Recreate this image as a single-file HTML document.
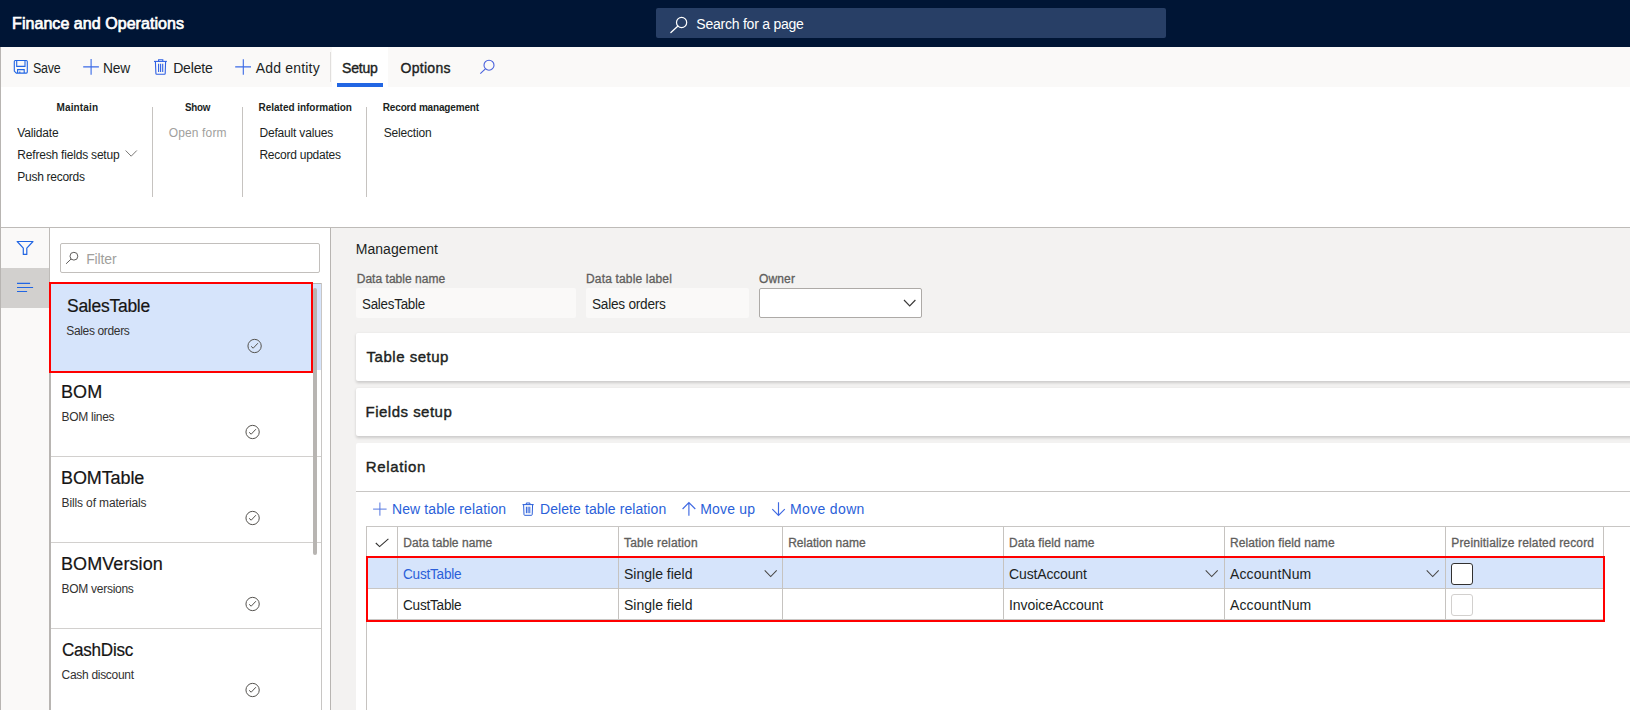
<!DOCTYPE html>
<html><head><meta charset="utf-8"><title>Finance and Operations</title>
<style>
*{box-sizing:border-box;margin:0;padding:0}
html,body{width:1630px;height:710px;overflow:hidden}
body{position:relative;background:#f3f2f1;font-family:"Liberation Sans",sans-serif;color:#201f1e}
.a{position:absolute}
.t{position:absolute;white-space:nowrap;line-height:1}
svg{position:absolute;overflow:visible}
.vl{position:absolute;width:1px;background:#c6c3c0}
.hl{position:absolute;height:1px;background:#c8c6c4}
</style></head><body>
<!-- header -->
<div class="a" style="left:0;top:0;width:1630px;height:47px;background:#001535"></div>
<div class="a" style="left:656px;top:8px;width:510px;height:30px;background:#283f66;border-radius:2px"></div>
<svg style="left:668px;top:14px" width="20" height="20" viewBox="0 0 20 20"><circle cx="13.6" cy="8.5" r="5.1" fill="none" stroke="#fff" stroke-width="1.2"/><path d="M10 12.1 L2.9 18.6" stroke="#fff" stroke-width="1.3" stroke-linecap="round"/></svg>
<!-- toolbar -->
<div class="a" style="left:0;top:47px;width:1630px;height:40px;background:#faf9f8"></div>
<div class="a" style="left:332px;top:47px;width:56px;height:40px;background:#fff"></div>
<div class="a" style="left:337px;top:83px;width:46px;height:4px;background:#2266e3"></div>
<div class="vl" style="left:330px;top:52px;height:30px;background:#e1dfdd"></div>
<!-- ribbon -->
<div class="a" style="left:0;top:87px;width:1630px;height:140px;background:#fff"></div>
<div class="hl" style="left:0;top:227px;width:1630px;background:#bebbb8"></div>
<div class="vl" style="left:152px;top:107px;height:90px"></div>
<div class="vl" style="left:242px;top:107px;height:90px"></div>
<div class="vl" style="left:366px;top:107px;height:90px"></div>
<!-- left strip + list pane -->
<div class="a" style="left:0;top:228px;width:50px;height:482px;background:#faf9f8"></div>
<div class="a" style="left:0;top:268px;width:50px;height:40px;background:#d2d0ce"></div>
<div class="a" style="left:50px;top:228px;width:280px;height:482px;background:#fff"></div>
<div class="vl" style="left:330px;top:228px;height:482px;background:#b8b5b2"></div>
<div class="vl" style="left:0;top:47px;height:663px;background:#b8b5b2"></div>
<div class="vl" style="left:49px;top:228px;height:55px;background:#bebbb8"></div>
<!-- filter box -->
<div class="a" style="left:60px;top:243px;width:260px;height:30px;background:#fff;border:1px solid #c2bfbc;border-radius:2px"></div>
<!-- list -->
<div class="a" style="left:51px;top:284px;width:270px;height:86px;background:#d6e4fb"></div>
<div class="hl" style="left:51px;top:283px;width:271px;background:#b8b5b2"></div>
<div class="vl" style="left:321px;top:283px;height:427px;background:#c8c6c4"></div>
<div class="a" style="left:49px;top:283px;width:2px;height:427px;background:#b8b5b2"></div>
<div class="hl" style="left:51px;top:456px;width:270px;background:#d2d0ce"></div>
<div class="hl" style="left:51px;top:542px;width:270px;background:#d2d0ce"></div>
<div class="hl" style="left:51px;top:628px;width:270px;background:#d2d0ce"></div>
<div class="a" style="left:313px;top:288px;width:4px;height:267px;background:#b8b5b2;border-radius:2px"></div>
<div class="a" style="left:49px;top:282px;width:264px;height:91px;background:#d6e4fb;border:2px solid #ff0000"></div>
<!-- main -->
<div class="a" style="left:356px;top:288px;width:220px;height:30px;background:#faf9f8;border-radius:2px"></div>
<div class="a" style="left:586px;top:288px;width:163px;height:30px;background:#faf9f8;border-radius:2px"></div>
<div class="a" style="left:759px;top:288px;width:163px;height:30px;background:#fff;border:1px solid #adaaa7;border-radius:2px"></div>
<div class="a" style="left:356px;top:333px;width:1290px;height:48px;background:#fff;border-radius:2px;box-shadow:0 1.5px 3px rgba(0,0,0,.16)"></div>
<div class="a" style="left:356px;top:388px;width:1290px;height:48px;background:#fff;border-radius:2px;box-shadow:0 1.5px 3px rgba(0,0,0,.16)"></div>
<div class="a" style="left:356px;top:443px;width:1290px;height:280px;background:#fff;border-radius:2px"></div>
<div class="hl" style="left:356px;top:491px;width:1274px"></div>
<!-- grid -->
<div class="hl" style="left:366px;top:526px;width:1264px"></div>
<div class="vl" style="left:366px;top:526px;height:184px"></div>
<div class="a" style="left:367px;top:558px;width:1236px;height:30px;background:#d6e4fb"></div>
<div class="hl" style="left:367px;top:588px;width:1237px"></div>
<div class="vl" style="left:397px;top:527px;height:93px"></div>
<div class="vl" style="left:618px;top:527px;height:93px"></div>
<div class="vl" style="left:782px;top:527px;height:93px"></div>
<div class="vl" style="left:1003px;top:527px;height:93px"></div>
<div class="vl" style="left:1224px;top:527px;height:93px"></div>
<div class="vl" style="left:1445px;top:527px;height:93px"></div>
<div class="vl" style="left:1603px;top:527px;height:93px"></div>
<div class="hl" style="left:368px;top:619px;width:1235px"></div>
<div class="a" style="left:1451px;top:563px;width:22px;height:22px;background:#fff;border:1px solid #323130;border-radius:3px"></div>
<div class="a" style="left:1451px;top:594px;width:22px;height:22px;background:#fff;border:1px solid #d2d0ce;border-radius:3px"></div>
<div class="a" style="left:366px;top:556px;width:1239px;height:66px;border:2px solid #ff0000"></div>
<!-- save icon -->
<svg style="left:13px;top:59px" width="16" height="16" viewBox="13 59 16 16" fill="none" stroke="#2266e3" stroke-width="1.1"><path d="M14.3 61.5 q0 -1 1 -1 H26.3 q1 0 1 1 V72.1 q0 1 -1 1 H16.3 L14.3 71.1 Z"/><path d="M16.7 60.5 V66.4 H25 V60.5"/><path d="M17.6 73.1 V69.6 H24.2 V73.1"/><path d="M19.8 73.1 V71.4"/></svg>
<!-- plus New -->
<svg style="left:82px;top:58px" width="18" height="18" viewBox="82 58 18 18" fill="none" stroke="#3a6ae6" stroke-width="1.1"><path d="M83.2 66.9 H98.9 M91.1 59.1 V74.7"/></svg>
<!-- trash Delete -->
<svg style="left:153px;top:58px" width="16" height="18" viewBox="153 58 16 18" fill="none" stroke="#2f60e4" stroke-width="1.1"><path d="M154 61.4 H166.9"/><path d="M158.6 61.4 V59.7 H162.8 V61.4"/><path d="M155.4 61.4 L155.9 73.6 q0 0.7 0.8 0.7 H164.4 q0.8 0 0.8 -0.7 L165.6 61.4"/><path d="M158.6 63.8 V71.9 M160.6 63.8 V71.9 M162.7 63.8 V71.9"/></svg>
<!-- plus Add entity -->
<svg style="left:234px;top:58px" width="18" height="18" viewBox="234 58 18 18" fill="none" stroke="#3a6ae6" stroke-width="1.1"><path d="M235.2 66.9 H251 M243.3 59.2 V74.8"/></svg>
<!-- toolbar search -->
<svg style="left:478px;top:58px" width="18" height="18" viewBox="478 58 18 18" fill="none" stroke="#4a62dc" stroke-width="1.1"><circle cx="489" cy="65.2" r="5"/><path d="M485.4 68.8 L480.3 73.7"/></svg>
<!-- ribbon chevron -->
<svg style="left:124px;top:148px" width="14" height="10" viewBox="124 148 14 10" fill="none" stroke="#7a7876" stroke-width="1"><path d="M125.6 150.5 L131.2 156.2 L136.8 150.5"/></svg>
<!-- funnel -->
<svg style="left:15px;top:239px" width="20" height="18" viewBox="15 239 20 18" fill="none" stroke="#2266e3" stroke-width="1.2" stroke-linejoin="round"><path d="M17.2 241.5 H33 L26.8 248.2 V254.4 H23.3 V248.2 Z"/></svg>
<!-- lines -->
<svg style="left:15px;top:280px" width="20" height="14" viewBox="15 280 20 14" fill="none" stroke="#2266e3" stroke-width="1.2"><path d="M17 283.4 H30.1 M17 287.5 H33.1 M17 291.5 H27.1"/></svg>
<!-- filter search -->
<svg style="left:64px;top:250px" width="16" height="16" viewBox="64 250 16 16" fill="none" stroke="#605e5c" stroke-width="1"><circle cx="73.9" cy="256.2" r="3.9"/><path d="M71.1 259 L66.1 263.8"/></svg>
<!-- check circles -->
<svg style="left:246px;top:337px" width="18" height="18" viewBox="246 337 18 18" fill="none" stroke="#55534f" stroke-width="1"><circle cx="254.6" cy="346" r="6.65"/><path d="M251.1 346.3 L253.2 348.2 L257.9 343.2"/></svg>
<svg style="left:244px;top:423px" width="18" height="18" viewBox="246 337 18 18" fill="none" stroke="#55534f" stroke-width="1"><circle cx="254.6" cy="346" r="6.65"/><path d="M251.1 346.3 L253.2 348.2 L257.9 343.2"/></svg>
<svg style="left:244px;top:509px" width="18" height="18" viewBox="246 337 18 18" fill="none" stroke="#55534f" stroke-width="1"><circle cx="254.6" cy="346" r="6.65"/><path d="M251.1 346.3 L253.2 348.2 L257.9 343.2"/></svg>
<svg style="left:244px;top:595px" width="18" height="18" viewBox="246 337 18 18" fill="none" stroke="#55534f" stroke-width="1"><circle cx="254.6" cy="346" r="6.65"/><path d="M251.1 346.3 L253.2 348.2 L257.9 343.2"/></svg>
<svg style="left:244px;top:681px" width="18" height="18" viewBox="246 337 18 18" fill="none" stroke="#55534f" stroke-width="1"><circle cx="254.6" cy="346" r="6.65"/><path d="M251.1 346.3 L253.2 348.2 L257.9 343.2"/></svg>
<!-- owner chevron -->
<svg style="left:902px;top:297px" width="16" height="12" viewBox="902 297 16 12" fill="none" stroke="#3b3a39" stroke-width="1.2"><path d="M904 300 L909.7 305.8 L915.4 300"/></svg>
<!-- relation actions -->
<svg style="left:372px;top:501px" width="16" height="16" viewBox="372 501 16 16" fill="none" stroke="#5577e0" stroke-width="1"><path d="M373.1 509.1 H386.6 M379.9 502.5 V515.7"/></svg>
<svg style="left:521px;top:501px" width="14" height="16" viewBox="521 501 14 16" fill="none" stroke="#2b5fd9" stroke-width="1"><path d="M522.5 504.6 H533.7"/><path d="M526.3 504.6 V503 H529.9 V504.6"/><path d="M523.6 504.6 L524 514.6 q0 .7 .7 .7 H531.5 q.7 0 .7 -.7 L532.6 504.6"/><path d="M526.4 506.7 V513.2 M528.1 506.7 V513.2 M529.8 506.7 V513.2"/></svg>
<svg style="left:681px;top:501px" width="16" height="16" viewBox="681 501 16 16" fill="none" stroke="#3f69e2" stroke-width="1.15"><path d="M688.9 515.8 V502.6 M682.6 509 L688.9 502.6 L695.3 509"/></svg>
<svg style="left:770px;top:501px" width="16" height="16" viewBox="770 501 16 16" fill="none" stroke="#3f69e2" stroke-width="1.15"><path d="M778.5 502.3 V515.4 M772.3 509.1 L778.5 515.4 L784.8 509.1"/></svg>
<!-- header check -->
<svg style="left:374px;top:536px" width="16" height="12" viewBox="374 536 16 12" fill="none" stroke="#323130" stroke-width="1.1"><path d="M375.8 543 L379.6 546.6 L388.4 538.9"/></svg>
<!-- cell chevrons -->
<svg style="left:763px;top:568px" width="16" height="12" viewBox="763 568 16 12" fill="none" stroke="#484644" stroke-width="1.05"><path d="M764.7 570.4 L770.7 576.5 L776.7 570.4"/></svg>
<svg style="left:1204px;top:568px" width="16" height="12" viewBox="763 568 16 12" fill="none" stroke="#484644" stroke-width="1.05"><path d="M764.7 570.4 L770.7 576.5 L776.7 570.4"/></svg>
<svg style="left:1425px;top:568px" width="16" height="12" viewBox="763 568 16 12" fill="none" stroke="#484644" stroke-width="1.05"><path d="M764.7 570.4 L770.7 576.5 L776.7 570.4"/></svg>

<div class="t" style="left:12.10px;top:16.00px;font-size:16px;letter-spacing:0.049px;color:#ffffff;-webkit-text-stroke:0.7px #ffffff;">Finance and Operations</div>
<div class="t" style="left:696.30px;top:17.00px;font-size:14px;letter-spacing:-0.232px;color:#ffffff;">Search for a page</div>
<div class="t" style="left:33.40px;top:61.00px;font-size:14px;letter-spacing:-0.250px;color:#201f1e;transform:scaleX(0.8893);transform-origin:0 0;">Save</div>
<div class="t" style="left:103.31px;top:61.00px;font-size:14px;letter-spacing:-0.250px;color:#201f1e;transform:scaleX(0.9855);transform-origin:0 0;">New</div>
<div class="t" style="left:173.20px;top:61.00px;font-size:14px;letter-spacing:-0.177px;color:#201f1e;">Delete</div>
<div class="t" style="left:255.80px;top:61.00px;font-size:14px;letter-spacing:0.182px;color:#201f1e;">Add entity</div>
<div class="t" style="left:342.10px;top:61.00px;font-size:14px;letter-spacing:-0.225px;color:#201f1e;-webkit-text-stroke:0.38px #201f1e;">Setup</div>
<div class="t" style="left:400.60px;top:61.00px;font-size:14px;letter-spacing:0.275px;color:#201f1e;-webkit-text-stroke:0.38px #201f1e;">Options</div>
<div class="t" style="left:56.50px;top:103.00px;font-size:10px;letter-spacing:0.136px;color:#201f1e;font-weight:700;">Maintain</div>
<div class="t" style="left:185.10px;top:103.00px;font-size:10px;letter-spacing:-0.250px;color:#201f1e;transform:scaleX(0.9795);transform-origin:0 0;font-weight:700;">Show</div>
<div class="t" style="left:258.60px;top:103.00px;font-size:10px;letter-spacing:-0.033px;color:#201f1e;font-weight:700;">Related information</div>
<div class="t" style="left:382.80px;top:103.00px;font-size:10px;letter-spacing:-0.162px;color:#201f1e;font-weight:700;">Record management</div>
<div class="t" style="left:17.30px;top:127.00px;font-size:12px;letter-spacing:-0.172px;color:#201f1e;">Validate</div>
<div class="t" style="left:17.30px;top:149.00px;font-size:12px;letter-spacing:-0.194px;color:#201f1e;">Refresh fields setup</div>
<div class="t" style="left:17.30px;top:171.00px;font-size:12px;letter-spacing:-0.282px;color:#201f1e;">Push records</div>
<div class="t" style="left:168.80px;top:127.00px;font-size:12px;letter-spacing:0.126px;color:#a19f9d;">Open form</div>
<div class="t" style="left:259.40px;top:127.00px;font-size:12px;letter-spacing:-0.173px;color:#201f1e;">Default values</div>
<div class="t" style="left:259.40px;top:149.00px;font-size:12px;letter-spacing:-0.240px;color:#201f1e;">Record updates</div>
<div class="t" style="left:383.70px;top:127.00px;font-size:12px;letter-spacing:-0.174px;color:#201f1e;">Selection</div>
<div class="t" style="left:86.20px;top:252.00px;font-size:14px;letter-spacing:-0.130px;color:#a19f9d;">Filter</div>
<div class="t" style="left:66.80px;top:297.00px;font-size:18px;letter-spacing:-0.250px;color:#161514;transform:scaleX(0.9697);transform-origin:0 0;-webkit-text-stroke:0.2px #161514;">SalesTable</div>
<div class="t" style="left:66.30px;top:325.00px;font-size:12px;letter-spacing:-0.351px;color:#323130;">Sales orders</div>
<div class="t" style="left:61.00px;top:383.00px;font-size:18px;letter-spacing:0.097px;color:#161514;-webkit-text-stroke:0.2px #161514;">BOM</div>
<div class="t" style="left:61.60px;top:411.00px;font-size:12px;letter-spacing:-0.293px;color:#323130;">BOM lines</div>
<div class="t" style="left:61.00px;top:469.00px;font-size:18px;letter-spacing:-0.103px;color:#161514;-webkit-text-stroke:0.2px #161514;">BOMTable</div>
<div class="t" style="left:61.60px;top:497.00px;font-size:12px;letter-spacing:-0.139px;color:#323130;">Bills of materials</div>
<div class="t" style="left:61.00px;top:555.00px;font-size:18px;letter-spacing:0.086px;color:#161514;-webkit-text-stroke:0.2px #161514;">BOMVersion</div>
<div class="t" style="left:61.60px;top:583.00px;font-size:12px;letter-spacing:-0.287px;color:#323130;">BOM versions</div>
<div class="t" style="left:62.00px;top:641.00px;font-size:18px;letter-spacing:-0.250px;color:#161514;transform:scaleX(0.9473);transform-origin:0 0;-webkit-text-stroke:0.2px #161514;">CashDisc</div>
<div class="t" style="left:61.60px;top:669.00px;font-size:12px;letter-spacing:-0.301px;color:#323130;">Cash discount</div>
<div class="t" style="left:355.70px;top:242.00px;font-size:14px;letter-spacing:0.064px;color:#201f1e;">Management</div>
<div class="t" style="left:356.70px;top:273.00px;font-size:12px;letter-spacing:0.030px;color:#605e5c;-webkit-text-stroke:0.3px #605e5c;">Data table name</div>
<div class="t" style="left:586.00px;top:273.00px;font-size:12px;letter-spacing:0.165px;color:#605e5c;-webkit-text-stroke:0.3px #605e5c;">Data table label</div>
<div class="t" style="left:759.10px;top:273.00px;font-size:12px;letter-spacing:0.113px;color:#605e5c;-webkit-text-stroke:0.3px #605e5c;">Owner</div>
<div class="t" style="left:362.00px;top:297.00px;font-size:14px;letter-spacing:-0.250px;color:#201f1e;transform:scaleX(0.9541);transform-origin:0 0;">SalesTable</div>
<div class="t" style="left:592.30px;top:297.00px;font-size:14px;letter-spacing:-0.250px;color:#201f1e;transform:scaleX(0.9744);transform-origin:0 0;">Sales orders</div>
<div class="t" style="left:366.60px;top:349.00px;font-size:15px;letter-spacing:0.512px;color:#201f1e;-webkit-text-stroke:0.4px #201f1e;">Table setup</div>
<div class="t" style="left:365.60px;top:404.00px;font-size:15px;letter-spacing:0.479px;color:#201f1e;-webkit-text-stroke:0.4px #201f1e;">Fields setup</div>
<div class="t" style="left:365.70px;top:459.00px;font-size:15px;letter-spacing:0.658px;color:#201f1e;-webkit-text-stroke:0.4px #201f1e;">Relation</div>
<div class="t" style="left:391.90px;top:502.00px;font-size:14px;letter-spacing:0.125px;color:#2b5fd9;">New table relation</div>
<div class="t" style="left:540.00px;top:502.00px;font-size:14px;letter-spacing:0.083px;color:#2b5fd9;">Delete table relation</div>
<div class="t" style="left:700.30px;top:502.00px;font-size:14px;letter-spacing:0.165px;color:#2b5fd9;">Move up</div>
<div class="t" style="left:790.00px;top:502.00px;font-size:14px;letter-spacing:0.349px;color:#2b5fd9;">Move down</div>
<div class="t" style="left:403.30px;top:537.00px;font-size:12px;letter-spacing:0.059px;color:#605e5c;-webkit-text-stroke:0.3px #605e5c;">Data table name</div>
<div class="t" style="left:624.00px;top:537.00px;font-size:12px;letter-spacing:0.169px;color:#605e5c;-webkit-text-stroke:0.3px #605e5c;">Table relation</div>
<div class="t" style="left:788.20px;top:537.00px;font-size:12px;letter-spacing:0.008px;color:#605e5c;-webkit-text-stroke:0.3px #605e5c;">Relation name</div>
<div class="t" style="left:1009.10px;top:537.00px;font-size:12px;letter-spacing:0.095px;color:#605e5c;-webkit-text-stroke:0.3px #605e5c;">Data field name</div>
<div class="t" style="left:1230.00px;top:537.00px;font-size:12px;letter-spacing:0.103px;color:#605e5c;-webkit-text-stroke:0.3px #605e5c;">Relation field name</div>
<div class="t" style="left:1451.30px;top:537.00px;font-size:12px;letter-spacing:0.146px;color:#605e5c;-webkit-text-stroke:0.3px #605e5c;">Preinitialize related record</div>
<div class="t" style="left:403.30px;top:567.00px;font-size:14px;letter-spacing:-0.250px;color:#2b5fd9;transform:scaleX(0.9724);transform-origin:0 0;">CustTable</div>
<div class="t" style="left:624.00px;top:567.00px;font-size:14px;letter-spacing:-0.000px;color:#201f1e;">Single field</div>
<div class="t" style="left:1009.10px;top:567.00px;font-size:14px;letter-spacing:-0.168px;color:#201f1e;">CustAccount</div>
<div class="t" style="left:1230.00px;top:567.00px;font-size:14px;letter-spacing:0.124px;color:#201f1e;">AccountNum</div>
<div class="t" style="left:403.30px;top:598.00px;font-size:14px;letter-spacing:-0.250px;color:#201f1e;transform:scaleX(0.9724);transform-origin:0 0;">CustTable</div>
<div class="t" style="left:624.00px;top:598.00px;font-size:14px;letter-spacing:-0.000px;color:#201f1e;">Single field</div>
<div class="t" style="left:1009.00px;top:598.00px;font-size:14px;letter-spacing:-0.066px;color:#201f1e;">InvoiceAccount</div>
<div class="t" style="left:1230.00px;top:598.00px;font-size:14px;letter-spacing:0.124px;color:#201f1e;">AccountNum</div>
</body></html>
